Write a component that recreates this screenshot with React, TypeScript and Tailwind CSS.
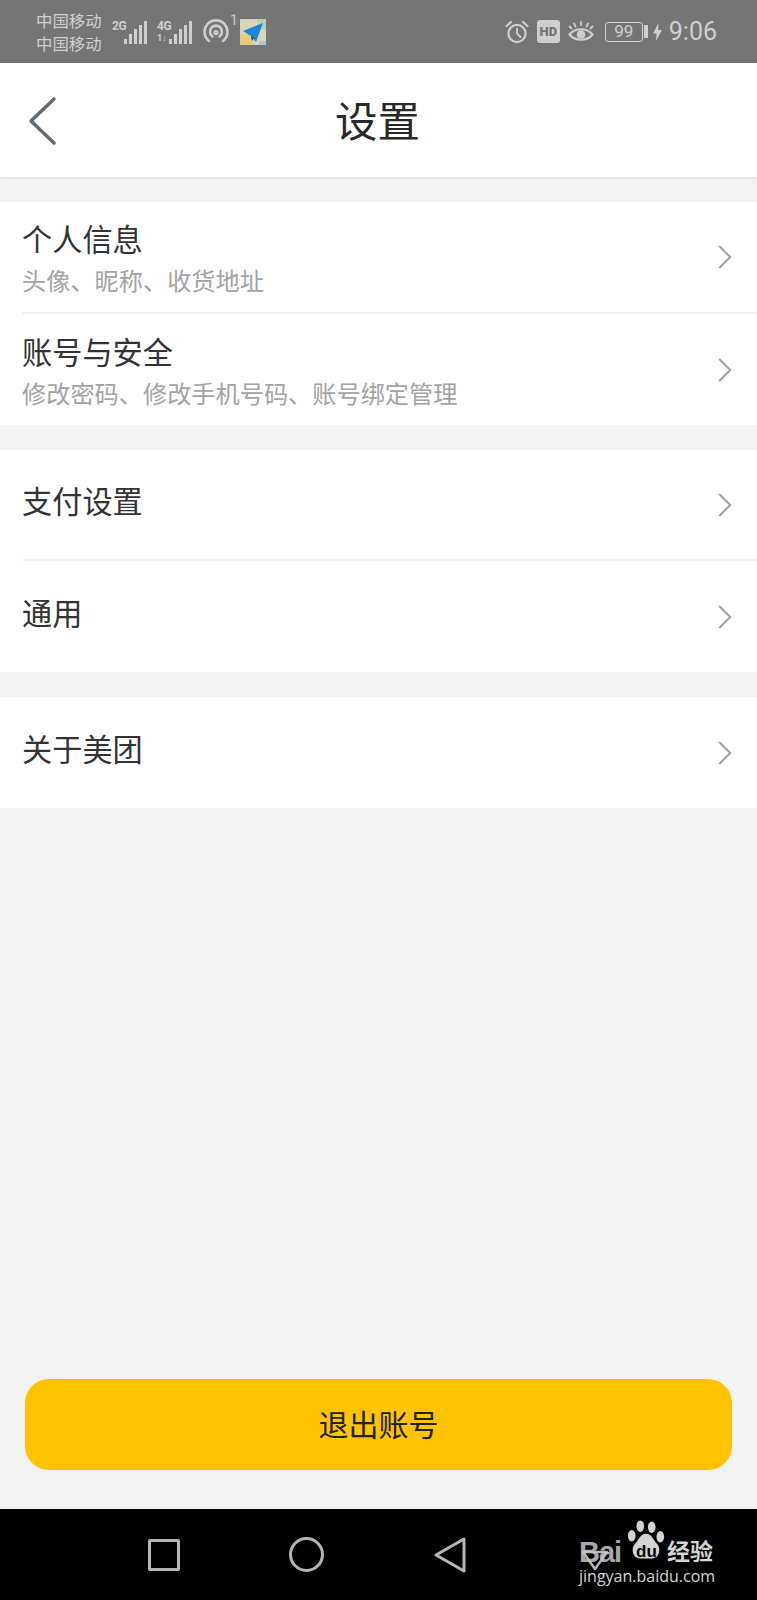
import { ChevronRight } from "lucide-react";

const font = "font-['Noto_Sans_CJK_SC','Noto_Sans',sans-serif]";

function Signal({ label, sub }: { label: string; sub?: string }) {
  return (
    <div className="flex items-end h-[24px]">
      <div className="flex flex-col items-start w-[12px] h-[24px] font-['Roboto',sans-serif] font-bold text-[12px] leading-[12px] text-[#cfcfcf] whitespace-nowrap">
        <span className="tracking-[-0.5px]">{label}</span>
        {sub && <span className="text-[9px] leading-[12px]">{sub}</span>}
      </div>
      <div className="flex items-end gap-[2px]">
        <div className="w-[3px] h-[5px] bg-[#cfcfcf]" />
        <div className="w-[3px] h-[10px] bg-[#cfcfcf]" />
        <div className="w-[3px] h-[15px] bg-[#cfcfcf]" />
        <div className="w-[3px] h-[19px] bg-[#cfcfcf]" />
        <div className="w-[3px] h-[23px] bg-[#cfcfcf]" />
      </div>
    </div>
  );
}

function StatusBar() {
  return (
    <div className={`${font} h-[63px] bg-[#757575] flex items-center pl-[36px] pr-[40px] text-[#cfcfcf]`}>
      <div className="flex flex-col text-[16.4px] leading-[23px] w-[66px] mt-[1px]">
        <span>中国移动</span>
        <span>中国移动</span>
      </div>
      <div className="flex items-center gap-[10px] ml-[10px]">
        <Signal label="2G" />
        <Signal label="4G" sub="1↓" />
      </div>
      <svg className="ml-[11px] mt-[1px]" width="26" height="26" viewBox="0 0 26 26" fill="none" stroke="#cfcfcf" strokeWidth="2.6" strokeLinecap="round">
        <path d="M6 22a11.5 11.5 0 1 1 14 0" />
        <path d="M9.5 17.5a6 6 0 1 1 7 0" />
        <circle cx="13" cy="13.5" r="1.6" strokeWidth="2" />
      </svg>
      <span className="font-['Roboto',sans-serif] text-[14px] leading-none self-start mt-[13px] ml-[1px] w-[7px]">1</span>
      <svg className="ml-[3px]" width="26" height="26" viewBox="0 0 26 26">
        <rect width="26" height="26" fill="#d9d6b8" />
        <path d="M0 16 L10 14 L14 26 L0 26Z" fill="#e3cc7c" />
        <path d="M17 0H26V12L20 9Z" fill="#b9d3a6" />
        <path d="M20 22H26V26H18Z" fill="#a9c4e4" />
        <path d="M3 12 L23 4 L16 23 L11 17Z" fill="#1b87d8" />
        <path d="M11 17 L12 22 L14 19Z" fill="#0d4f86" />
      </svg>
      <div className="flex-1" />
      <svg width="24" height="24" viewBox="0 0 24 24" fill="none" stroke="#cfcfcf" strokeWidth="2.2" strokeLinecap="round">
        <circle cx="12" cy="13.5" r="8.6" />
        <path d="M12 8.5V13.5L15.5 17" strokeWidth="1.8" />
        <path d="M1.5 6 L6 2M22.5 6 L18 2" />
      </svg>
      <div className="ml-[8px] w-[23px] h-[23px] rounded-[3px] bg-[#cfcfcf] flex items-center justify-center font-['Roboto',sans-serif] font-black text-[13px] text-[#757575]">HD</div>
      <svg className="ml-[8px]" width="26" height="24" viewBox="0 0 26 24" fill="none" stroke="#cfcfcf" strokeWidth="2.2" strokeLinecap="round">
        <path d="M1.5 14.5C7 7.5 19 7.5 24.5 14.5C19 21.5 7 21.5 1.5 14.5Z" />
        <circle cx="13" cy="14.5" r="4.3" fill="#cfcfcf" stroke="none" />
        <path d="M13 2V5M6 3.5L7.5 6.5M20 3.5L18.5 6.5M1.5 6.5L3.5 8.5M24.5 6.5L22.5 8.5" strokeWidth="1.8" />
      </svg>
      <div className="ml-[11px] w-[38px] h-[20px] rounded-[3px] border border-[#cfcfcf] flex items-center justify-center font-['Roboto',sans-serif] text-[17px] leading-none">99</div>
      <div className="ml-[1px] w-[4px] h-[13px] bg-[#cfcfcf]" />
      <svg className="ml-[5px]" width="9" height="18" viewBox="0 0 9 18" fill="#cfcfcf">
        <path d="M5.5 0L0 10.5H3.5L3 18L9 7H5.2Z" />
      </svg>
      <span className="ml-[7px] font-['Roboto',sans-serif] text-[25px] leading-none">9:06</span>
    </div>
  );
}

function Row({ title, sub, divider, first }: { title: string; sub?: string; divider?: boolean; first?: boolean }) {
  return (
    <div className="pl-[22px]">
      <div className={`${divider ? "border-b-2 border-[#f3f3f3]" : ""} ${first ? "h-[112px]" : "h-[111px]"} flex items-center pr-[24px]`}>
        {sub ? (
          <div className="flex-1 flex flex-col pt-[8px]">
            <span className="text-[30.2px] leading-[38px] text-[#333333]">{title}</span>
            <span className="text-[24.2px] leading-[46px] text-[#a3a3a3]">{sub}</span>
          </div>
        ) : (
          <span className="flex-1 pb-[9px] text-[30.2px] leading-[38px] text-[#333333]">{title}</span>
        )}
        <ChevronRight size={42} strokeWidth={1.1} className="text-[#a0a0a0] -mr-[13px]" />
      </div>
    </div>
  );
}

function NavBar() {
  return (
    <div className="h-[91px] bg-black flex items-center relative shrink-0">
      <div className="w-[32px] h-[32px] ml-[148px] border-[3px] rounded-[2px] border-[#b5b5b5]" />
      <div className="w-[35px] h-[35px] ml-[109px] border-[3px] rounded-full border-[#b5b5b5]" />
      <svg className="ml-[110px]" width="32" height="36" viewBox="0 0 32 36" fill="none" stroke="#b5b5b5" strokeWidth="3" strokeLinejoin="round">
        <path d="M2 18L30 2V34Z" />
      </svg>
      {/* baidu watermark */}
      <div className="absolute left-[579px] top-[10px] w-[140px] h-[66px] text-[#d4d4d4]">
        <svg className="absolute left-[2px] top-[24px]" width="28" height="28" viewBox="0 0 28 28" fill="none" stroke="#b5b5b5" strokeWidth="2.5" strokeLinejoin="round">
          <path d="M2 9H26L14 26Z" />
        </svg>
        <span className="absolute left-0 top-[19px] font-['Liberation_Sans',sans-serif] font-bold text-[29px] leading-[28px] tracking-[-1px] text-[#c8c8c8]/85">Bai</span>
        <svg className="absolute left-[47px] top-0" width="40" height="43" viewBox="0 0 42 42" fill="#d4d4d4">
          <ellipse cx="15" cy="6" rx="4" ry="6" />
          <ellipse cx="27" cy="7" rx="4" ry="6" />
          <ellipse cx="6" cy="16" rx="4" ry="6" />
          <ellipse cx="36" cy="17" rx="4" ry="6" />
          <path d="M21 14C15 14 14 20 9 25C5 30 7 40 15 40H27C35 40 37 30 33 25C28 20 27 14 21 14Z" />
        </svg>
        <span className="absolute left-[57px] top-[24px] font-['Liberation_Sans',sans-serif] font-bold text-[17px] leading-none text-black">du</span>
        <span className={`${font} absolute left-[88px] top-[17px] text-[23px] leading-[28px] font-bold whitespace-nowrap`}>经验</span>
        <span className="absolute left-0 top-[47px] font-['Open_Sans',sans-serif] text-[16px] leading-[20px] whitespace-nowrap">jingyan.baidu.com</span>
      </div>
    </div>
  );
}

export default function App() {
  return (
    <div className={`${font} w-[757px] h-[1600px] flex flex-col bg-[#f3f3f3] overflow-hidden`}>
      <StatusBar />
      <div className="h-[114px] bg-white shadow-[0_1px_3px_rgba(0,0,0,0.1)] flex items-center relative shrink-0">
        <svg className="absolute left-[26px] top-[31px]" width="34" height="54" viewBox="0 0 34 54" fill="none" stroke="#5f6b70" strokeWidth="3.5" strokeLinecap="round" strokeLinejoin="round">
          <path d="M28 5L5 27L28 49" />
        </svg>
        <span className="flex-1 text-center text-[42.5px] leading-none text-[#282828] pb-[2px] pr-[2px]">设置</span>
      </div>
      <div className="flex-1 flex flex-col pt-[25px]">
        <div className="bg-white">
          <Row title="个人信息" sub="头像、昵称、收货地址" divider first />
          <Row title="账号与安全" sub="修改密码、修改手机号码、账号绑定管理" />
        </div>
        <div className="bg-white mt-[25px]">
          <Row title="支付设置" divider />
          <Row title="通用" />
        </div>
        <div className="bg-white mt-[25px]">
          <Row title="关于美团" />
        </div>
        <div className="flex-1" />
        <div className="px-[25px] pb-[39px]">
          <div className="h-[91px] rounded-[24px] bg-[#ffc300] flex items-center justify-center text-[30px] text-[#222222] pb-[3px]">退出账号</div>
        </div>
      </div>
      <NavBar />
    </div>
  );
}
